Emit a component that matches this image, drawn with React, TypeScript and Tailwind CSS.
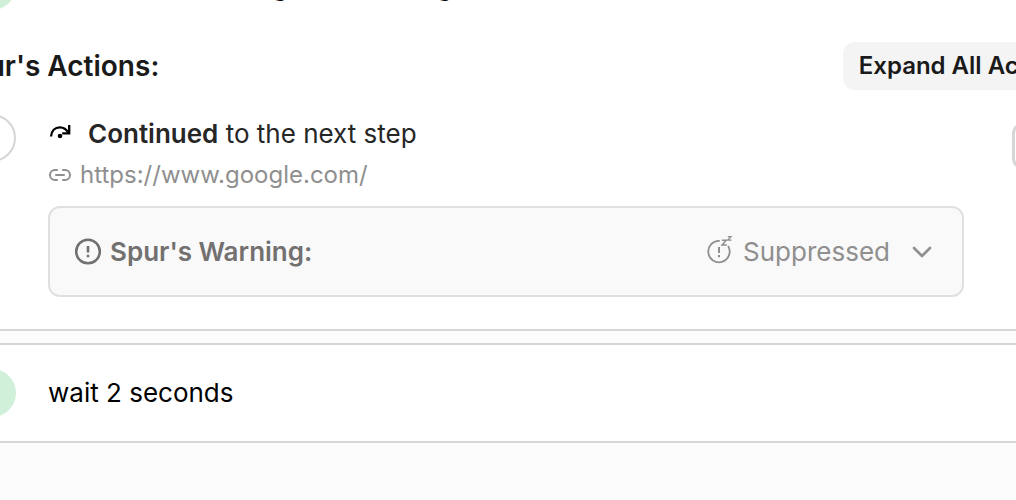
import { ChevronDown, Link2 } from "lucide-react";

function StepOverIcon() {
  return (
    <svg aria-hidden="true" viewBox="0 0 24 24" className="size-6 shrink-0" fill="none" stroke="currentColor" strokeWidth="2.300">
      <path d="M3 14.500C3.400 8.900 7 5.300 11.800 5.300c3.800 0 6.900 2.200 8.600 5.400" />
      <path d="M21.200 3v8.300H14.200" />
      <circle cx="12" cy="14" r="2.300" fill="currentColor" stroke="none" />
    </svg>
  );
}

function WarningIcon() {
  return (
    <svg aria-hidden="true" viewBox="0 0 28 28" className="size-7 shrink-0" fill="none" stroke="currentColor" strokeWidth="2.600">
      <circle cx="14" cy="13.500" r="11.800" />
      <path d="M14 8v6.500M14 16.700v2.500" />
    </svg>
  );
}

function SnoozeIcon() {
  return (
    <svg aria-hidden="true" viewBox="0 0 32 32" className="size-8 shrink-0" fill="none" stroke="currentColor" strokeWidth="1.800">
      <path d="M16.800 4.900A10.700 10.700 0 1 0 25.100 10" />
      <path d="M16 11v6M16 19v2.200" strokeWidth="2" />
      <path d="M18.800 4.200h4.400l-4.200 4.900h4.800" strokeWidth="1.500" />
      <path d="M24.800 0.700h3.200l-3.200 3.400h3.700" strokeWidth="1.300" />
    </svg>
  );
}

function Step({ title, children }: { title: string; children?: React.ReactNode }) {
  return (
    <section className="border-2 border-[#d6d6d6] bg-white p-6">
      <div className="flex items-center gap-8">
        <span className="size-12 shrink-0 rounded-full bg-[#d1f0d9]" />
        <h2 className="pb-0.5 text-[26px] leading-[39px] text-black">{title}</h2>
      </div>
      {children}
    </section>
  );
}

export default function App() {
  return (
    <div className="min-h-screen overflow-hidden bg-[#fcfcfc] font-['Inter',sans-serif]">
      <main className="-mx-[58px] -mt-16 flex flex-col gap-3">
        <Step title="check in the settings and loading">
          <div className="-mr-11 -ml-4 mt-8 flex items-center justify-between">
            <h3 className="text-[28px] leading-[42px] font-semibold text-[#1a1a1a]">Spur's Actions:</h3>
            <button type="button" className="h-12 rounded-xl bg-[#f4f4f4] px-4 text-2xl font-semibold text-[#1a1a1a]">
              Expand All Actions
            </button>
          </div>
          <div className="mt-6 mb-2 flex items-start gap-8">
            <span className="size-12 shrink-0 rounded-full border-2 border-[#d6d6d6]" />
            <div className="min-w-0 flex-1">
              <div className="flex items-center gap-4 text-[26px] leading-[39px] text-[#262626]">
                <span className="text-black"><StepOverIcon /></span>
                <p><strong className="font-semibold">Continued</strong> to the next step</p>
              </div>
              <a href="https://www.google.com/" className="mt-1 flex items-center gap-2 text-2xl leading-9 text-[#8f8f8f]">
                <Link2 aria-hidden="true" size={24} strokeWidth={2} />
                https://www.google.com/
              </a>
              <div className="mt-[13px] flex items-center rounded-xl border-2 border-[#e0e0e0] bg-[#f9f9f9] p-6 text-[26px] leading-[39px]">
                <div className="flex flex-1 items-center gap-2 font-semibold text-[#737070]">
                  <WarningIcon />
                  Spur's Warning:
                </div>
                <button type="button" className="flex items-center gap-2 text-[#8f8f8f]">
                  <SnoozeIcon />
                  Suppressed
                  <ChevronDown aria-hidden="true" size={32} strokeWidth={2} className="ml-2" />
                </button>
              </div>
            </div>
            <button type="button" aria-label="More" className="-mr-3 mt-2 ml-4 size-12 rounded-xl border-[3px] border-[#d6d6d6]" />
          </div>
        </Step>
        <Step title="wait 2 seconds" />
      </main>
    </div>
  );
}
